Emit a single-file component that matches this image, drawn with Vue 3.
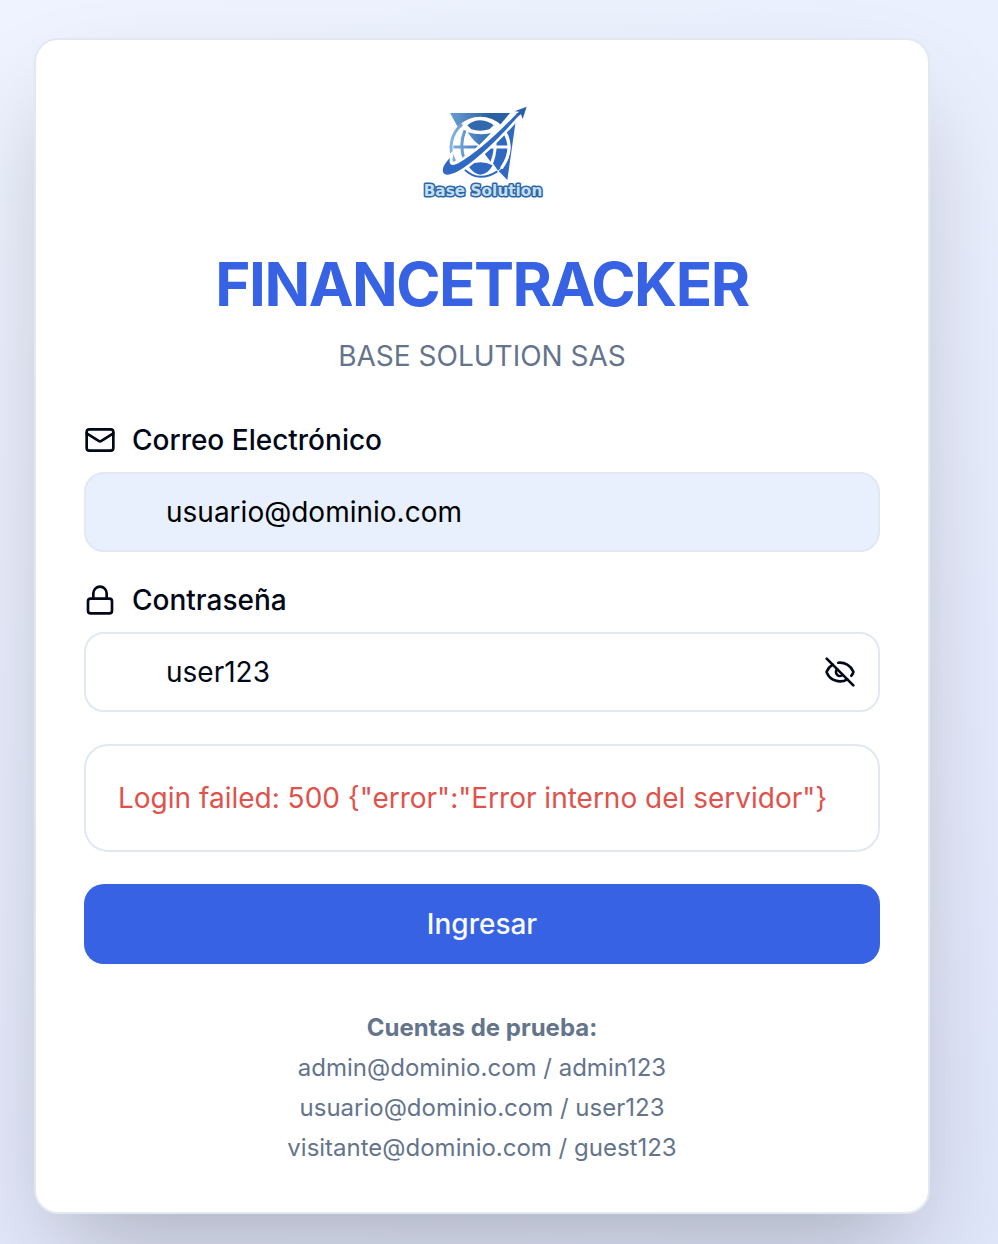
<script setup>
import { ref } from 'vue'

const email = ref('usuario@dominio.com')
const password = ref('user123')
const visible = ref(true)
const error = ref('Login failed: 500 {"error":"Error interno del servidor"}')
const accounts = [
  'admin@dominio.com / admin123',
  'usuario@dominio.com / user123',
  'visitante@dominio.com / guest123',
]
</script>

<template>
  <main class="page">
    <section class="card">
      <header class="head">
        <svg class="logo" viewBox="24 27 384 288" role="img" aria-label="Base Solution">
          <defs>
            <linearGradient id="band" gradientUnits="userSpaceOnUse" x1="120" y1="60" x2="318" y2="60">
              <stop offset="0" stop-color="#6a9fd4" />
              <stop offset="0.6" stop-color="#2a5f9f" />
              <stop offset="1" stop-color="#2c62ad" />
            </linearGradient>
            <linearGradient id="globe" gradientUnits="userSpaceOnUse" x1="120" y1="150" x2="270" y2="150">
              <stop offset="0" stop-color="#86b7e2" />
              <stop offset="0.6" stop-color="#3f78bd" />
              <stop offset="1" stop-color="#2f66b4" />
            </linearGradient>
          </defs>
          <path d="M120 54H300L270 90L150 108Z" fill="url(#band)" />
          <path d="M318 72L292 255L262 224L240 130Z" fill="#3069c2" />
          <circle cx="211" cy="156" r="91" fill="#fff" />
          <path d="M156 88A88 88 0 0 0 134 199" fill="none" stroke="url(#globe)" stroke-width="9" />
          <path d="M172 91Q190 76 211 76Q235 77 251 91L238 103Q211 111 184 103Z" fill="#3268ad" />
          <path d="M173 112Q211 123 243 114L208 150Q190 138 173 112Z" fill="url(#globe)" />
          <path d="M165 106Q146 151 164 196M130 156H202" fill="none" stroke="url(#globe)" stroke-width="9" />
          <path d="M208 181L280 108Q316 160 278 213L264 227L248 204Q230 194 208 181Z" fill="#3069c2" />
          <path d="M251 128Q262 163 244 207M240 156H294" fill="none" stroke="#fff" stroke-width="9" />
          <path d="M207 190L222 174L244 203Q225 193 207 190Z" fill="#fff" />
          <path d="M174 211Q211 192 248 211Q234 238 211 239Q189 237 174 211Z" fill="#3069c2" />
          <path d="M160 220Q204 266 262 229" fill="none" stroke="#3069c2" stroke-width="6" />
          <path d="M284 114Q314 163 274 220" fill="none" stroke="#fff" stroke-width="9" />
          <path d="M120 188Q91 218 101 235Q109 246 145 228Q219 184 328 60L322 54Q222 160 145 205Q113 221 120 188Z" fill="#3069c2" stroke="#fff" stroke-width="16" paint-order="stroke" />
          <path d="M314 49L350 35L338 72L333 58L326 62L320 56L328 50Z" fill="#285fa8" />
          <text x="219" y="302" text-anchor="middle" class="wordmark">Base Solution</text>
        </svg>
        <h1 class="title">FINANCETRACKER</h1>
        <p class="subtitle">BASE SOLUTION SAS</p>
      </header>

      <form class="form" @submit.prevent>
        <div class="field">
          <label class="label" for="email">
            <svg class="icon" viewBox="0 0 24 24" aria-hidden="true">
              <rect x="2" y="4" width="20" height="16" rx="2" />
              <path d="m22 7-8.97 5.7a1.94 1.94 0 0 1-2.06 0L2 7" />
            </svg>
            Correo Electrónico
          </label>
          <input id="email" v-model="email" class="input filled" type="email" />
        </div>

        <div class="field">
          <label class="label" for="password">
            <svg class="icon" viewBox="0 0 24 24" aria-hidden="true">
              <rect x="3" y="11" width="18" height="11" rx="2" />
              <path d="M7 11V7a5 5 0 0 1 10 0v4" />
            </svg>
            Contraseña
          </label>
          <div class="control">
            <input id="password" v-model="password" class="input" :type="visible ? 'text' : 'password'" />
            <button class="toggle" type="button" aria-label="Ocultar contraseña" @click="visible = !visible">
              <svg class="icon" viewBox="0 0 24 24" aria-hidden="true">
                <path d="M10.733 5.076a10.744 10.744 0 0 1 11.205 6.575 1 1 0 0 1 0 .696 10.747 10.747 0 0 1-1.444 2.49" />
                <path d="M14.084 14.158a3 3 0 0 1-4.242-4.242" />
                <path d="M17.479 17.499a10.75 10.75 0 0 1-15.417-5.151 1 1 0 0 1 0-.696 10.75 10.75 0 0 1 4.446-5.143" />
                <path d="m2 2 20 20" />
              </svg>
            </button>
          </div>
        </div>

        <div class="alert" role="alert">{{ error }}</div>
        <button class="submit" type="submit">Ingresar</button>
      </form>

      <footer class="accounts">
        <p><strong>Cuentas de prueba:</strong></p>
        <p v-for="account in accounts" :key="account">{{ account }}</p>
      </footer>
    </section>
  </main>
</template>

<style>
body {
  margin: 0;
}
</style>

<style scoped>
* {
  box-sizing: border-box;
}
.page {
  min-height: 100vh;
  padding: 38px 68px 30px 34px;
  overflow: hidden;
  background: linear-gradient(160deg, #eef3ff, #e0e6fa);
  color: #020817;
  font-family: Inter, "Liberation Sans", sans-serif;
  font-size: 28px;
  line-height: 40px;
}
.card {
  max-width: 896px;
  margin: 0 auto;
  padding: 48px;
  border: 2px solid #e2e8f0;
  border-radius: 24px;
  background: #fff;
  box-shadow: 0 50px 100px -24px rgba(0, 0, 0, 0.25);
}
.head {
  display: flex;
  flex-direction: column;
  align-items: center;
  padding-top: 16px;
  text-align: center;
}
.logo {
  width: 128px;
  height: 96px;
}
.wordmark {
  fill: #c3def3;
  stroke: #2b66a5;
  stroke-width: 9px;
  stroke-linejoin: round;
  paint-order: stroke;
  font-family: "DejaVu Sans", sans-serif;
  font-size: 46px;
  font-weight: 700;
}
.title {
  margin: 48px 0 0;
  color: #3662e3;
  font-size: 60px;
  font-weight: 700;
  line-height: 72px;
  letter-spacing: -0.025em;
}
.subtitle {
  margin: 16px 0 0;
  color: #64748b;
}
.form {
  display: flex;
  flex-direction: column;
  gap: 32px;
  margin-top: 48px;
}
.field {
  display: flex;
  flex-direction: column;
  gap: 16px;
}
.label {
  display: flex;
  align-items: center;
  gap: 16px;
  font-weight: 500;
  line-height: 32px;
}
.icon {
  display: block;
  width: 32px;
  height: 32px;
  fill: none;
  stroke: currentColor;
  stroke-width: 2;
  stroke-linecap: round;
  stroke-linejoin: round;
}
.control {
  position: relative;
}
.input {
  display: block;
  width: 100%;
  height: 80px;
  padding: 16px 80px;
  border: 2px solid #e2e8f0;
  border-radius: 20px;
  outline: none;
  background: #fff;
  color: #020817;
  font: inherit;
}
.filled {
  background: #e8f0fe;
  color: #000;
}
.toggle {
  position: absolute;
  top: 0;
  right: 0;
  display: flex;
  align-items: center;
  height: 100%;
  padding: 0 24px;
  border: 0;
  background: none;
  color: inherit;
}
.alert {
  padding: 32px;
  border: 2px solid #e2e8f0;
  border-radius: 24px;
  color: #df524b;
}
.submit {
  height: 80px;
  border: 0;
  border-radius: 20px;
  background: #3662e3;
  color: #f8fafc;
  font: inherit;
  font-weight: 500;
}
.accounts {
  display: flex;
  flex-direction: column;
  gap: 8px;
  margin-top: 48px;
  color: #64748b;
  font-size: 24px;
  line-height: 32px;
  text-align: center;
}
.accounts p {
  margin: 0;
}
</style>
